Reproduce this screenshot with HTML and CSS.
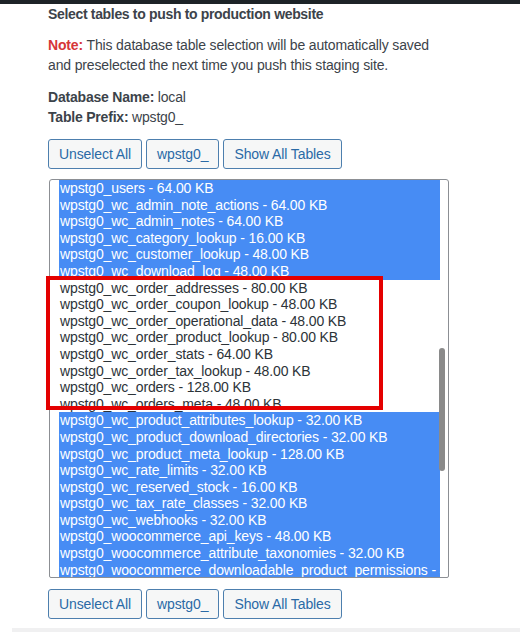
FILE: index.html
```html
<!DOCTYPE html>
<html>
<head>
<meta charset="utf-8">
<link rel="stylesheet" href="styles.css">
</head>
<body>
<div class="topbar"></div>
<main class="panel">
  <h3 class="title">Select tables to push to production website</h3>
  <p class="note"><strong class="note-label">Note:</strong> This database table selection will be automatically saved and preselected the next time you push this staging site.</p>
  <p class="meta"><strong>Database Name:</strong> local<br><strong>Table Prefix:</strong> wpstg0_</p>
  <div class="actions">
    <button class="btn">Unselect All</button>
    <button class="btn">wpstg0_</button>
    <button class="btn">Show All Tables</button>
  </div>
  <div class="select-wrap">
    <div class="tables">
      <div class="opts">
        <div class="opt sel">wpstg0_users - 64.00 KB</div>
        <div class="opt sel">wpstg0_wc_admin_note_actions - 64.00 KB</div>
        <div class="opt sel">wpstg0_wc_admin_notes - 64.00 KB</div>
        <div class="opt sel">wpstg0_wc_category_lookup - 16.00 KB</div>
        <div class="opt sel">wpstg0_wc_customer_lookup - 48.00 KB</div>
        <div class="opt sel">wpstg0_wc_download_log - 48.00 KB</div>
        <div class="opt">wpstg0_wc_order_addresses - 80.00 KB</div>
        <div class="opt">wpstg0_wc_order_coupon_lookup - 48.00 KB</div>
        <div class="opt">wpstg0_wc_order_operational_data - 48.00 KB</div>
        <div class="opt">wpstg0_wc_order_product_lookup - 80.00 KB</div>
        <div class="opt">wpstg0_wc_order_stats - 64.00 KB</div>
        <div class="opt">wpstg0_wc_order_tax_lookup - 48.00 KB</div>
        <div class="opt">wpstg0_wc_orders - 128.00 KB</div>
        <div class="opt">wpstg0_wc_orders_meta - 48.00 KB</div>
        <div class="opt sel">wpstg0_wc_product_attributes_lookup - 32.00 KB</div>
        <div class="opt sel">wpstg0_wc_product_download_directories - 32.00 KB</div>
        <div class="opt sel">wpstg0_wc_product_meta_lookup - 128.00 KB</div>
        <div class="opt sel">wpstg0_wc_rate_limits - 32.00 KB</div>
        <div class="opt sel">wpstg0_wc_reserved_stock - 16.00 KB</div>
        <div class="opt sel">wpstg0_wc_tax_rate_classes - 32.00 KB</div>
        <div class="opt sel">wpstg0_wc_webhooks - 32.00 KB</div>
        <div class="opt sel">wpstg0_woocommerce_api_keys - 48.00 KB</div>
        <div class="opt sel">wpstg0_woocommerce_attribute_taxonomies - 32.00 KB</div>
        <div class="opt sel">wpstg0_woocommerce_downloadable_product_permissions - 48.00 KB</div>
      </div>
      <div class="track"><div class="thumb"></div></div>
    </div>
    <div class="highlight"></div>
  </div>
  <div class="actions">
    <button class="btn">Unselect All</button>
    <button class="btn">wpstg0_</button>
    <button class="btn">Show All Tables</button>
  </div>
</main>
<div class="footer-line"></div>
</body>
</html>
```

FILE: styles.css
```css
html, body {
  margin: 0;
  padding: 0;
  background: #ffffff;
}
body {
  width: 520px;
  height: 632px;
  overflow: hidden;
  font-family: "Liberation Sans", Arial, sans-serif;
  font-size: 14px;
  color: #3c434a;
  display: flex;
  flex-direction: column;
}
.topbar {
  height: 4px;
  background: #1d2327;
  flex: none;
}
.panel {
  padding-left: 48px;
  flex: none;
}
.title {
  margin: 0;
  font-size: 14px;
  line-height: 20px;
  font-weight: 700;
  letter-spacing: -0.33px;
}
.note {
  margin: 11px 0 0;
  line-height: 20px;
  width: 400px;
  letter-spacing: -0.15px;
}
.note-label {
  color: #d63638;
}
.meta {
  margin: 12px 0 0;
  line-height: 20px;
  letter-spacing: -0.2px;
}
.meta strong {
  font-weight: 700;
}
.actions {
  display: flex;
  gap: 4px;
  margin-top: 12px;
}
.select-wrap + .actions {
  margin-top: 11px;
}
.btn {
  height: 30px;
  padding: 0 10px;
  font-family: "Liberation Sans", Arial, sans-serif;
  font-size: 14px;
  line-height: 28px;
  letter-spacing: -0.1px;
  color: #2a6aa6;
  background: #f6f7f7;
  border: 1px solid #4d7fae;
  border-radius: 3px;
}
.select-wrap {
  position: relative;
  margin-top: 10px;
  margin-left: 1px;
}
.tables {
  width: 398px;
  height: 397px;
  border: 1px solid #8c8f94;
  border-radius: 3px 3px 2px 2px;
  display: flex;
  overflow: hidden;
  background: #fff;
}
.opts {
  flex: 1;
  min-width: 0;
  padding-left: 9px;
  overflow: hidden;
}
.opt {
  height: 16.6px;
  line-height: 16.6px;
  padding-left: 1px;
  white-space: nowrap;
  overflow: hidden;
  letter-spacing: -0.13px;
  color: #2c3338;
}
.opt.sel {
  background: #478cf4;
  color: #ffffff;
}
.track {
  width: 8px;
  flex: none;
  position: relative;
}
.thumb {
  position: absolute;
  left: -1px;
  top: 168px;
  width: 6px;
  height: 123px;
  border-radius: 3px;
  background: #8a8a8a;
}
.highlight {
  position: absolute;
  left: -3px;
  top: 97px;
  width: 329px;
  height: 126px;
  border: 4px solid #e40000;
  pointer-events: none;
}
.footer-line {
  margin-top: 9px;
  margin-left: 12px;
  height: 4px;
  background: #f0f0f1;
  flex: none;
}
```
